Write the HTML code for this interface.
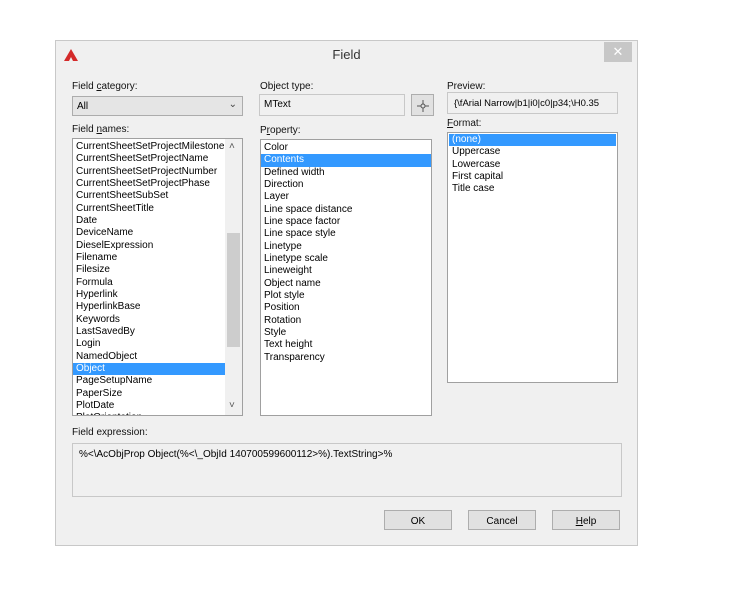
<!DOCTYPE html>
<html><head><style>
body{margin:0;width:739px;height:600px;background:#fff;font-family:"Liberation Sans",sans-serif;font-size:10px;color:#000;position:relative;overflow:hidden}
.a{position:absolute}
.dlg{left:55px;top:40px;width:583px;height:506px;background:#f0f0f0;border:1px solid #c8c8c8;box-sizing:border-box}
.tb{left:0;top:0;width:581px;height:27px;background:#f0f0f0}
.box{background:#fff;border:1px solid #a0a0a0;box-sizing:border-box}
.lbl{font-size:10px;color:#111}
.list div{height:12.33px;line-height:12px;padding-left:3px;white-space:nowrap;overflow:hidden}
.sel{background:#3399ff;color:#fff}
.btn{background:#e1e1e1;border:1px solid #adadad;box-sizing:border-box;text-align:center;line-height:20px}
</style></head><body>
<div class="a dlg">
 <div class="a tb">
  <svg class="a" style="left:8px;top:8px" width="14" height="12" viewBox="0 0 14 12"><path d="M7 0L14 12H9L7 8 5 12H0Z" fill="#d42a2a"/></svg>
  <div class="a" style="left:0;width:581px;top:6px;text-align:center;font-size:13px;color:#333">Field</div>
  <div class="a" style="left:548px;top:1px;width:28px;height:20px;background:#c7c7c7;color:#fff;text-align:center;line-height:19px;font-size:13px">✕</div>
 </div>
</div>
<div class="a lbl" style="left:72px;top:81px">Field <u>c</u>ategory:</div>
<div class="a box" style="left:72px;top:96px;width:171px;height:20px;background:#e5e5e5;border-color:#acacac;padding:4px 0 0 4px">All<span class="a" style="right:5px;top:2px;color:#444">⌄</span></div>
<div class="a lbl" style="left:72px;top:124px">Field <u>n</u>ames:</div>
<div class="a box list" style="left:72px;top:138px;width:171px;height:278px;overflow:hidden;padding-top:2px">
<div>CurrentSheetSetProjectMilestone</div><div>CurrentSheetSetProjectName</div><div>CurrentSheetSetProjectNumber</div><div>CurrentSheetSetProjectPhase</div><div>CurrentSheetSubSet</div><div>CurrentSheetTitle</div><div>Date</div><div>DeviceName</div><div>DieselExpression</div><div>Filename</div><div>Filesize</div><div>Formula</div><div>Hyperlink</div><div>HyperlinkBase</div><div>Keywords</div><div>LastSavedBy</div><div>Login</div><div>NamedObject</div><div class="sel" style="width:149px">Object</div><div>PageSetupName</div><div>PaperSize</div><div>PlotDate</div><div>PlotOrientation</div>
</div>
<div class="a" style="left:225px;top:139px;width:17px;height:276px;background:#f0f0f0"></div>
<div class="a" style="left:227px;top:233px;width:13px;height:114px;background:#cdcdcd"></div>
<div class="a" style="left:229px;top:141px;color:#555">˄</div>
<div class="a" style="left:229px;top:400px;color:#555">˅</div>
<div class="a lbl" style="left:260px;top:81px">Object type:</div>
<div class="a box" style="left:259px;top:94px;width:146px;height:22px;border-color:#c8c8c8;background:#f0f0f0;padding:4px 0 0 4px">MText</div>
<div class="a btn" style="left:411px;top:94px;width:23px;height:22px"><svg style="margin-top:5px" width="12" height="12" viewBox="0 0 12 12"><path d="M6 0V4M6 8V12M0 6H4M8 6H12" stroke="#555" stroke-width="1"/><circle cx="6" cy="6" r="2" fill="none" stroke="#555"/></svg></div>
<div class="a lbl" style="left:260px;top:125px">P<u>r</u>operty:</div>
<div class="a box list" style="left:260px;top:139px;width:172px;height:277px;padding-top:2px">
<div>Color</div><div class="sel">Contents</div><div>Defined width</div><div>Direction</div><div>Layer</div><div>Line space distance</div><div>Line space factor</div><div>Line space style</div><div>Linetype</div><div>Linetype scale</div><div>Lineweight</div><div>Object name</div><div>Plot style</div><div>Position</div><div>Rotation</div><div>Style</div><div>Text height</div><div>Transparency</div>
</div>
<div class="a lbl" style="left:447px;top:81px">Preview:</div>
<div class="a box" style="left:447px;top:92px;width:171px;height:22px;border-color:#c8c8c8;background:#f0f0f0;padding:5px 0 0 6px;white-space:nowrap;overflow:hidden;font-size:9.5px">{\fArial Narrow|b1|i0|c0|p34;\H0.35</div>
<div class="a lbl" style="left:447px;top:118px"><u>F</u>ormat:</div>
<div class="a box list" style="left:447px;top:132px;width:171px;height:251px;padding:1px">
<div class="sel">(none)</div><div>Uppercase</div><div>Lowercase</div><div>First capital</div><div>Title case</div>
</div>
<div class="a lbl" style="left:72px;top:427px">Field expression:</div>
<div class="a box" style="left:72px;top:443px;width:550px;height:54px;border-color:#c8c8c8;background:#f0f0f0;padding:5px 0 0 6px">%&lt;\AcObjProp Object(%&lt;\_ObjId 140700599600112&gt;%).TextString&gt;%</div>
<div class="a btn" style="left:384px;top:510px;width:68px;height:20px;line-height:19px;padding-top:1px">OK</div>
<div class="a btn" style="left:468px;top:510px;width:68px;height:20px;line-height:19px;padding-top:1px">Cancel</div>
<div class="a btn" style="left:552px;top:510px;width:68px;height:20px;line-height:19px;padding-top:1px"><u>H</u>elp</div>
</body></html>
